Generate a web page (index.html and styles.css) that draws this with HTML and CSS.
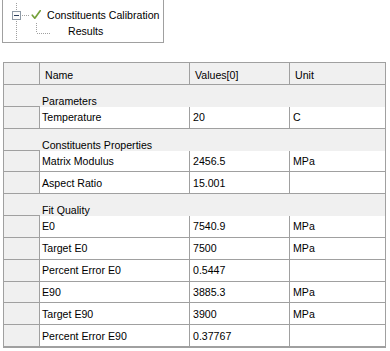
FILE: index.html
```html
<!DOCTYPE html>
<html lang="en">
<head>
  <meta charset="UTF-8">
  <title>Constituents Calibration</title>
  <link rel="stylesheet" href="styles.css">
</head>
<body>
  <div class="tree">
    <div class="tree-row tree-root">
      <svg class="tree-guide" width="44" height="23" viewBox="0 0 44 23">
        <line x1="13.5" y1="3" x2="13.5" y2="23" class="dots" />
        <rect x="9.5" y="11.5" width="8" height="8" class="expander" />
        <rect x="11" y="15" width="5" height="1" class="expander-minus" />
        <line x1="19" y1="15.5" x2="27" y2="15.5" class="dots" />
        <path d="M29.3 15.2 L31.8 18.2 L37.2 10.8" class="check" />
      </svg>
      <span class="tree-label">Constituents Calibration</span>
    </div>
    <div class="tree-row tree-child">
      <svg class="tree-guide" width="65" height="19" viewBox="0 0 65 19">
        <line x1="13.5" y1="0" x2="13.5" y2="17" class="dots" />
        <line x1="33.5" y1="0" x2="33.5" y2="10" class="dots" />
        <line x1="34" y1="10.5" x2="47" y2="10.5" class="dots" />
      </svg>
      <span class="tree-label">Results</span>
    </div>
  </div>

  <div class="grid">
    <div class="grid-row grid-head">
      <div class="cell rh"></div>
      <div class="cell">Name</div>
      <div class="cell">Values[0]</div>
      <div class="cell">Unit</div>
    </div>

    <div class="grid-row grid-group">
      <div class="cell rh"></div>
      <div class="cell group-label">Parameters</div>
    </div>
    <div class="grid-row">
      <div class="cell rh"></div>
      <div class="cell">Temperature</div>
      <div class="cell">20</div>
      <div class="cell">C</div>
    </div>

    <div class="grid-row grid-group">
      <div class="cell rh"></div>
      <div class="cell group-label">Constituents Properties</div>
    </div>
    <div class="grid-row">
      <div class="cell rh"></div>
      <div class="cell">Matrix Modulus</div>
      <div class="cell">2456.5</div>
      <div class="cell">MPa</div>
    </div>
    <div class="grid-row">
      <div class="cell rh"></div>
      <div class="cell">Aspect Ratio</div>
      <div class="cell">15.001</div>
      <div class="cell"></div>
    </div>

    <div class="grid-row grid-group">
      <div class="cell rh"></div>
      <div class="cell group-label">Fit Quality</div>
    </div>
    <div class="grid-row">
      <div class="cell rh"></div>
      <div class="cell">E0</div>
      <div class="cell">7540.9</div>
      <div class="cell">MPa</div>
    </div>
    <div class="grid-row">
      <div class="cell rh"></div>
      <div class="cell">Target E0</div>
      <div class="cell">7500</div>
      <div class="cell">MPa</div>
    </div>
    <div class="grid-row">
      <div class="cell rh"></div>
      <div class="cell">Percent Error E0</div>
      <div class="cell">0.5447</div>
      <div class="cell"></div>
    </div>
    <div class="grid-row">
      <div class="cell rh"></div>
      <div class="cell">E90</div>
      <div class="cell">3885.3</div>
      <div class="cell">MPa</div>
    </div>
    <div class="grid-row">
      <div class="cell rh"></div>
      <div class="cell">Target E90</div>
      <div class="cell">3900</div>
      <div class="cell">MPa</div>
    </div>
    <div class="grid-row">
      <div class="cell rh"></div>
      <div class="cell">Percent Error E90</div>
      <div class="cell">0.37767</div>
      <div class="cell"></div>
    </div>
  </div>
</body>
</html>
```

FILE: styles.css
```css
body {
  margin: 0;
  background-color: #ffffff;
  font-family: "Liberation Sans", Arial, sans-serif;
  font-size: 10.6px;
  color: #000000;
}

/* tree panel */
.tree {
  box-sizing: border-box;
  width: 162px;
  margin-left: 2px;
  border: 1px solid #a0a0a0;
  border-top: none;
}

.tree-row {
  display: flex;
  align-items: flex-start;
}

.tree-root {
  height: 23px;
}

.tree-child {
  height: 19px;
}

.tree-guide {
  display: block;
  flex-shrink: 0;
}

.tree-root .tree-label {
  padding-top: 7px;
  line-height: 16px;
}

.tree-child .tree-label {
  line-height: 17px;
}

.dots {
  stroke: #a0a0a0;
  stroke-width: 1;
  stroke-dasharray: 1 1;
  shape-rendering: crispEdges;
}

.expander {
  fill: #fbfbfb;
  stroke: #8f9aa6;
  stroke-width: 1;
  shape-rendering: crispEdges;
}

.expander-minus {
  fill: #2b3e5c;
}

.check {
  fill: none;
  stroke: #74a03a;
  stroke-width: 1.7;
  stroke-linecap: round;
  stroke-linejoin: round;
}

/* property grid */
.grid {
  box-sizing: border-box;
  width: 383px;
  margin: 19px 0 0 3px;
  border: 1px solid #a0a0a0;
}

.grid-row {
  display: grid;
  grid-template-columns: 36px 150px 100px 95px;
  height: 21.85px;
}

.grid-head {
  height: 22px;
}

.cell {
  box-sizing: border-box;
  display: flex;
  align-items: center;
  padding-left: 3px;
  background-color: #ffffff;
  border-right: 1px solid #a0a0a0;
  border-bottom: 1px solid #a0a0a0;
  white-space: nowrap;
  overflow: hidden;
}

.cell:last-child {
  border-right: none;
}

.cell:nth-child(2) {
  padding-left: 2px;
}

.rh {
  background-color: #f0f0f0;
}

.grid-head .cell {
  background-color: #f0f0f0;
  padding-left: 5px;
  padding-top: 3px;
}

.grid-group .rh {
  border-right: none;
}

.grid-group .group-label {
  grid-column: 2 / 5;
  align-items: flex-end;
  line-height: 12px;
  background-color: #f0f0f0;
  border-bottom: none;
}
```
